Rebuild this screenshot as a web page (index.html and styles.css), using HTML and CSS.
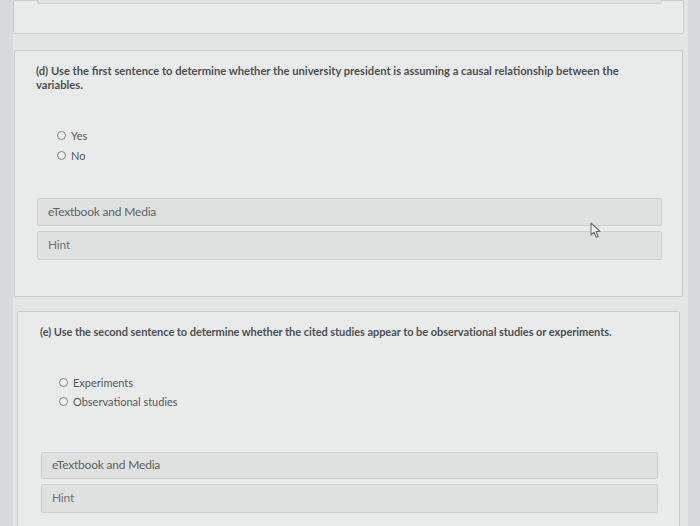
FILE: index.html
```html
<!DOCTYPE html>
<html lang="en">
<head>
    <meta charset="UTF-8">
    <meta name="viewport" content="width=device-width, initial-scale=1.0">
    <title>Question Parts</title>
    <link rel="stylesheet" href="styles.css">
</head>
<body>
    <div class="page">
        <!-- previous part, mostly scrolled out of view -->
        <div class="part part-prev">
            <div class="resource resource-cut"></div>
        </div>

        <div class="part part-d">
            <p class="question">(d) Use the first sentence to determine whether the university president is assuming a causal relationship between the variables.</p>
            <ul class="choices choices-d">
                <li><span class="radio"></span>Yes</li>
                <li><span class="radio"></span>No</li>
            </ul>
            <div class="resources resources-d">
                <div class="resource">eTextbook and Media</div>
                <div class="resource resource-hint">Hint</div>
            </div>
            <svg class="cursor" width="12" height="17" viewBox="0 0 12 17">
                <path d="M1 1 L1 13 L4 10.2 L6.3 15.3 L8.2 14.4 L6 9.5 L10 9.5 Z" fill="#f4f5f5" stroke="#6c6f70" stroke-width="1.1" stroke-linejoin="round"/>
            </svg>
        </div>

        <div class="part part-e">
            <p class="question">(e) Use the second sentence to determine whether the cited studies appear to be observational studies or experiments.</p>
            <ul class="choices choices-e">
                <li><span class="radio"></span>Experiments</li>
                <li><span class="radio"></span>Observational studies</li>
            </ul>
            <div class="resources resources-e">
                <div class="resource">eTextbook and Media</div>
                <div class="resource resource-hint">Hint</div>
            </div>
        </div>
    </div>
</body>
</html>
```

FILE: styles.css
```css
body { margin: 0; background: #d7dada; font-family: Lato, "Liberation Sans", sans-serif; height: 526px; overflow: hidden; }
.page { margin-left: 13px; width: 675px; height: 526px; background: #e3e5e5; }
.part { position: relative; background: #e9ebeb; border: 1px solid #c8cbcb; border-radius: 2px; box-sizing: border-box; }
.part-prev { height: 34px; margin: 0 4px 0 0; padding: 0 21px 29px 23px; display: flex; flex-direction: column; justify-content: flex-end; }
.part-d { margin: 16px 5px 0 1px; height: 247px; padding: 13px 20px 0 21px; }
.part-e { margin: 14px 8px 0 4px; height: 240px; padding: 13px 21px 0 22px; }
.question { margin: 0; font-size: 11.2px; line-height: 14px; font-weight: 700; color: #4d5052; max-width: 600px; }
.part-e .question { font-size: 11px; letter-spacing: -0.05px; }
.choices { list-style: none; margin: 0; padding: 0; font-size: 11px; color: #555859; }
.choices li { display: flex; align-items: center; height: 20px; }
.choices-d { margin-top: 33px; padding-left: 21px; }
.choices-e { margin-top: 34px; padding-left: 19px; }
.choices-e li { height: 19px; }
.radio { width: 7px; height: 7px; border: 1px solid #818485; border-radius: 50%; background: #eef0f0; margin-right: 5px; }
.resources { display: flex; flex-direction: column; gap: 5px; padding-left: 1px; }
.resources-d { margin-top: 33px; }
.resources-e { margin-top: 41px; }
.resource { height: 28px; box-sizing: border-box; padding: 0 11px 2px 10px; display: flex; align-items: center; background: #dfe1e1; border: 1px solid #cbcece; border-radius: 2px; font-size: 12px; color: #5e6162; letter-spacing: -0.2px; }
.resources-e .resource { height: 27px; }
.resource-hint { color: #6f7273; }
.resources-d .resource-hint, .resources-e .resource-hint { height: 29px; }
.resource-cut { height: 30px; margin-top: -30px; }
.cursor { position: absolute; left: 575px; top: 171px; }
```
